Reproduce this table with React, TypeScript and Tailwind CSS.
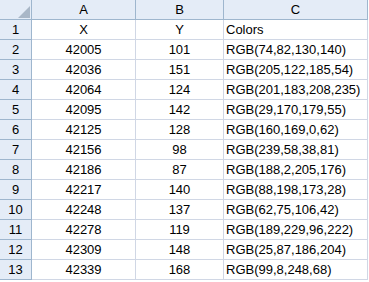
import React from "react";

const rows: [number, number, string][] = [
  [42005, 101, "RGB(74,82,130,140)"],
  [42036, 151, "RGB(205,122,185,54)"],
  [42064, 124, "RGB(201,183,208,235)"],
  [42095, 142, "RGB(29,170,179,55)"],
  [42125, 128, "RGB(160,169,0,62)"],
  [42156, 98, "RGB(239,58,38,81)"],
  [42186, 87, "RGB(188,2,205,176)"],
  [42217, 140, "RGB(88,198,173,28)"],
  [42248, 137, "RGB(62,75,106,42)"],
  [42278, 119, "RGB(189,229,96,222)"],
  [42309, 148, "RGB(25,87,186,204)"],
  [42339, 168, "RGB(99,8,248,68)"],
];

const hdr = "h-5 bg-[#e4ecf7] border-r border-b border-[#9eb6ce] flex items-center justify-center";
const cell = "h-5 bg-white border-r border-b border-[#d0d7e5] flex items-center";

export default function App() {
  return (
    <div
      className="w-[369px] h-[282px] bg-white text-black text-[13px] leading-none"
      style={{ fontFamily: '"Liberation Sans", Arial, sans-serif' }}
    >
      <div className="grid grid-cols-[32px_104px_88px_144px]">
        <div className={hdr + " relative"}>
          <svg className="absolute left-[18px] top-[6px]" width="12" height="12" viewBox="0 0 12 12">
            <polygon points="12,0 12,12 0,12" fill="#a9b7c7" />
          </svg>
        </div>
        <div className={hdr}>A</div>
        <div className={hdr}>B</div>
        <div className={hdr}>C</div>

        <div className={hdr}>1</div>
        <div className={cell + " justify-center"}>X</div>
        <div className={cell + " justify-center"}>Y</div>
        <div className={cell + " pl-[2px]"}>Colors</div>

        {rows.map((r, i) => (
          <React.Fragment key={i}>
            <div className={hdr}>{i + 2}</div>
            <div className={cell + " justify-center"}>{r[0]}</div>
            <div className={cell + " justify-center"}>{r[1]}</div>
            <div className={cell + " pl-[2px]"}>{r[2]}</div>
          </React.Fragment>
        ))}
      </div>
    </div>
  );
}
